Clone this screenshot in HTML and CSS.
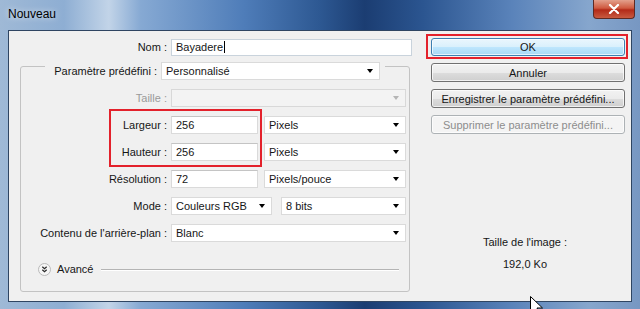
FILE: index.html
```html
<!DOCTYPE html>
<html lang="fr">
<head>
    <meta charset="UTF-8">
    <meta name="viewport" content="width=device-width, initial-scale=1.0">
    <title>Nouveau</title>
    <link rel="stylesheet" href="styles.css">
</head>
<body>
    <div class="window">
        <div class="titlebar">
            <span class="title">Nouveau</span>
            <div class="close">
                <svg width="12" height="10" viewBox="0 0 12 10"><path d="M2 1 L10 9 M10 1 L2 9" stroke="#fff" stroke-width="2.2" stroke-linecap="round"/></svg>
            </div>
        </div>
        <div class="client">
            <div class="form">
                <div class="row name-row">
                    <span class="lbl name-lbl">Nom :</span>
                    <div class="field input name-input">Bayadere<span class="caret"></span></div>
                </div>
                <fieldset class="group">
                    <legend class="preset">
                        <span class="preset-lbl">Paramètre prédéfini :</span>
                        <div class="field select preset-select"><span>Personnalisé</span><i class="arrow"></i></div>
                    </legend>
                    <div class="rows">
                        <div class="row">
                            <span class="lbl off">Taille :</span>
                            <div class="field select disabled w-full"><span></span><i class="arrow"></i></div>
                        </div>
                        <div class="pair">
                            <div class="row">
                                <span class="lbl">Largeur :</span>
                                <div class="field input w-short">256</div>
                                <div class="field select w-unit"><span>Pixels</span><i class="arrow"></i></div>
                            </div>
                            <div class="row">
                                <span class="lbl">Hauteur :</span>
                                <div class="field input w-short">256</div>
                                <div class="field select w-unit"><span>Pixels</span><i class="arrow"></i></div>
                            </div>
                            <div class="mark"></div>
                        </div>
                        <div class="row">
                            <span class="lbl">Résolution :</span>
                            <div class="field input w-short">72</div>
                            <div class="field select w-unit"><span>Pixels/pouce</span><i class="arrow"></i></div>
                        </div>
                        <div class="row">
                            <span class="lbl">Mode :</span>
                            <div class="field select w-mode"><span>Couleurs RGB</span><i class="arrow"></i></div>
                            <div class="field select w-bits"><span>8 bits</span><i class="arrow"></i></div>
                        </div>
                        <div class="row">
                            <span class="lbl">Contenu de l'arrière-plan :</span>
                            <div class="field select w-full"><span>Blanc</span><i class="arrow"></i></div>
                        </div>
                    </div>
                    <div class="advanced">
                        <svg class="adv-icon" width="13" height="13" viewBox="0 0 13 13">
                            <circle cx="6.5" cy="6.5" r="6" fill="#f6f6f6" stroke="#b9b9b9"/>
                            <path d="M4.3 3.8 L6.5 5.8 L8.7 3.8 M4.3 6.8 L6.5 8.8 L8.7 6.8" fill="none" stroke="#2a2a2a" stroke-width="1.2"/>
                        </svg>
                        <span>Avancé</span>
                        <span class="rule"></span>
                    </div>
                </fieldset>
            </div>
            <div class="side">
                <div class="ok-mark">
                    <button class="btn btn-ok">OK</button>
                </div>
                <button class="btn">Annuler</button>
                <button class="btn">Enregistrer le paramètre prédéfini...</button>
                <button class="btn" disabled>Supprimer le paramètre prédéfini...</button>
                <div class="image-size">
                    <div>Taille de l'image :</div>
                    <div class="size-value">192,0 Ko</div>
                </div>
            </div>
        </div>
        <svg class="pointer" width="14" height="22" viewBox="0 0 14 22">
            <path d="M0.5 0.5 L0.5 17 L4.5 13 L7.5 20 L10 19 L7 12 L12.5 12 Z" fill="#fff" stroke="#000" stroke-width="1"/>
        </svg>
    </div>
</body>
</html>
```

FILE: styles.css
```css
body {
    margin: 0;
    padding: 0;
    background-color: #1d3f70;
    font-family: "Liberation Sans", Arial, sans-serif;
    font-size: 11px;
    color: #161616;
}
.window {
    position: relative;
    width: 640px;
    height: 309px;
    overflow: hidden;
    background: linear-gradient(90deg, #9fb9d6 0%, #8eaed3 10%, #c2d4e8 17%, #86a9d3 22%, #4f7db9 38%, #2d5892 50%, #1b3d72 57%, #2b5590 66%, #5a83ba 80%, #86a6cd 92%, #7797c2 100%);
}
.titlebar {
    height: 30px;
    display: flex;
    align-items: flex-start;
}
.title {
    margin: 7px 0 0 8px;
    font-size: 12px;
    line-height: 14px;
    color: #000;
    text-shadow: 0 0 6px rgba(255, 255, 255, 0.8);
}
.close {
    margin-left: auto;
    margin-right: 5px;
    width: 42px;
    height: 19px;
    display: flex;
    align-items: center;
    justify-content: center;
    box-sizing: border-box;
    border: 1px solid #5e2a24;
    border-top: none;
    border-radius: 0 0 4px 4px;
    background: linear-gradient(#e3a08c, #cf5a40 45%, #b32a18 55%, #c85a40);
}
.client {
    display: flex;
    box-sizing: border-box;
    width: 624px;
    height: 272px;
    margin: 0 8px;
    background-color: #f0f0f0;
    border: 1px solid #2f4562;
}
.form {
    width: 406px;
    box-sizing: border-box;
    padding: 7px 0 0 11px;
}
.row {
    display: flex;
    align-items: center;
    height: 18px;
}
.lbl {
    width: 146px;
    margin-right: 4px;
    text-align: right;
    white-space: nowrap;
}
.off {
    color: #9a9a9a;
}
.name-lbl {
    width: 147px;
}
.field {
    box-sizing: border-box;
    height: 18px;
    line-height: 16px;
    padding: 0 4px;
    background-color: #ffffff;
    border: 1px solid #dadada;
    white-space: nowrap;
}
.input {
    border-top-color: #c4c4c4;
}
.name-input {
    width: 241px;
    height: 17px;
    line-height: 15px;
    border-color: #c9d3dc;
}
.caret {
    display: inline-block;
    width: 1px;
    height: 12px;
    margin-left: 1px;
    vertical-align: -2px;
    background-color: #000;
}
.select {
    display: flex;
    align-items: center;
    justify-content: space-between;
}
.arrow {
    width: 0;
    height: 0;
    margin-right: 2px;
    border-left: 3.5px solid transparent;
    border-right: 3.5px solid transparent;
    border-top: 4px solid #000;
}
.disabled {
    background-color: #f3f3f3;
    border-color: #d8d8d8;
}
.disabled .arrow {
    border-top-color: #b5b5b5;
}
.group {
    width: 390px;
    min-width: 0;
    box-sizing: border-box;
    margin: -4px 0 0 0;
    padding: 9px 2px 14px 0;
    border: 1px solid #c3c3c3;
    border-radius: 3px;
}
.preset {
    display: flex;
    align-items: center;
    margin: 0 0 0 24px;
    padding: 10px 5px 0 4px;
}
.preset-lbl {
    width: 108px;
    margin-right: 4px;
    text-align: right;
    white-space: nowrap;
}
.preset-select {
    width: 219px;
}
.rows {
    display: flex;
    flex-direction: column;
    gap: 9px;
}
.pair {
    position: relative;
    display: flex;
    flex-direction: column;
    gap: 9px;
}
.mark {
    position: absolute;
    left: 88px;
    top: -7px;
    width: 153px;
    height: 58px;
    box-sizing: border-box;
    border: 2px solid #e3212b;
}
.w-full {
    width: 235px;
}
.w-short {
    width: 87px;
}
.w-unit {
    width: 142px;
    margin-left: 6px;
}
.w-mode {
    width: 101px;
}
.w-bits {
    width: 125px;
    margin-left: 9px;
}
.advanced {
    display: flex;
    align-items: center;
    height: 16px;
    margin-top: 19px;
    padding-left: 17px;
}
.advanced span:first-of-type {
    margin-left: 6px;
}
.rule {
    flex: 1;
    height: 1px;
    margin: 0 8px 0 7px;
    background-color: #b4b4b4;
    box-shadow: 0 1px 0 #ffffff;
}
.side {
    display: flex;
    flex-direction: column;
    width: 202px;
    margin: 0 3px 0 auto;
    padding-top: 3px;
}
.ok-mark {
    border: 2px solid #e3212b;
    padding: 2px 1px 1px 3px;
    margin-bottom: 4px;
}
.btn {
    width: 194px;
    height: 19px;
    margin: 0 0 7px 5px;
    padding: 0;
    font-family: "Liberation Sans", Arial, sans-serif;
    font-size: 11px;
    color: #161616;
    border: 1px solid #707070;
    border-radius: 3px;
    background: linear-gradient(#f2f2f2 0%, #ebebeb 50%, #dddddd 51%, #cfcfcf 100%);
    box-shadow: inset 0 0 0 1px rgba(255, 255, 255, 0.7);
}
.btn-ok {
    margin: 0;
    height: 18px;
    border-color: #3c7fb1;
    background: linear-gradient(#eaf6fd 0%, #d9f0fc 50%, #bee6fd 51%, #a7d9f5 100%);
}
.btn:disabled {
    color: #8d8d8d;
    border-color: #adb2b5;
    background: #f4f4f4;
}
.image-size {
    margin-top: 93px;
    padding-right: 4px;
    text-align: center;
    line-height: 16px;
}
.size-value {
    margin-top: 6px;
}
.pointer {
    position: absolute;
    left: 530px;
    top: 296px;
}
```
